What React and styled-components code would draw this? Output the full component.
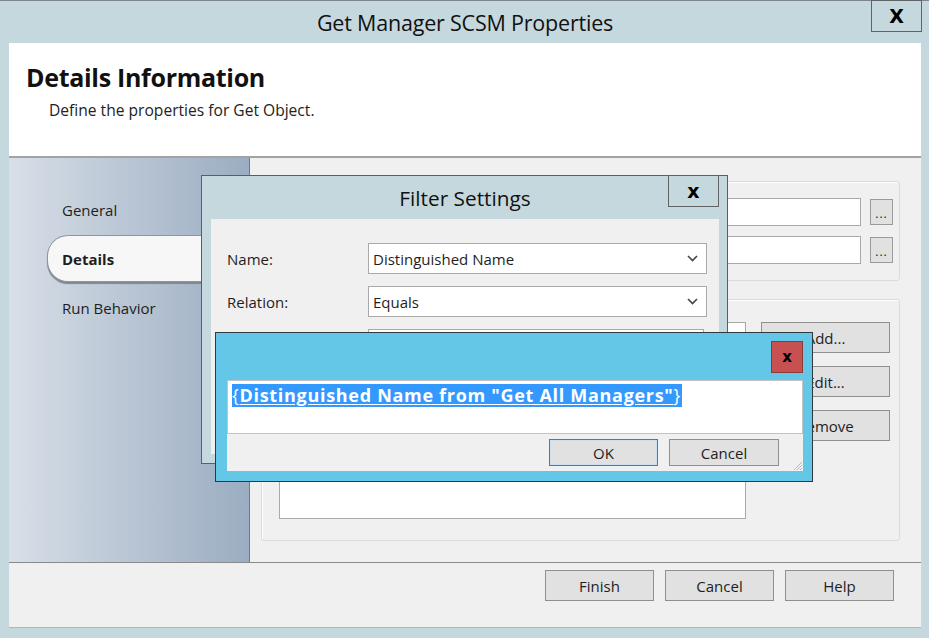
import React from "react";
import styled, { createGlobalStyle } from "styled-components";

const GlobalStyle = createGlobalStyle`
  html, body { margin: 0; padding: 0; }
  body {
    background: #c5d8de;
    font-family: "Open Sans", "Noto Sans", "Liberation Sans", sans-serif;
    color: #1e1e1e;
  }
`;

const Desktop = styled.div`
  position: relative;
  width: 929px;
  height: 638px;
  overflow: hidden;
`;

const Window = styled.div`
  display: flex;
  flex-direction: column;
  height: 100%;
  box-sizing: border-box;
  background: #c5d8de;
  border-top: 1px solid #7b878c;
  padding: 0 8px 10px 9px;
`;

const TitleBar = styled.div`
  display: grid;
  grid-template-columns: 1fr auto 1fr;
  height: ${({ h }) => h}px;
  flex-shrink: 0;
`;

const Title = styled.div`
  grid-column: 2;
  align-self: center;
  font-size: 21.5px;
  color: #111;
  letter-spacing: -0.2px;
`;

const CloseBtn = styled.div`
  grid-column: 3;
  justify-self: end;
  align-self: start;
  margin-top: -1px;
  margin-right: ${({ mr }) => mr || 0}px;
  width: ${({ w }) => w}px;
  height: 32px;
  box-sizing: border-box;
  border: 1px solid ${({ red }) => (red ? "#8d3a33" : "#5e6366")};
  background: ${({ red }) => (red ? "#c75050" : "transparent")};
  display: flex;
  align-items: center;
  justify-content: center;
  font-family: "DejaVu Sans", sans-serif;
  font-weight: bold;
  font-size: ${({ fs }) => fs}px;
  color: #000;
`;

const Client = styled.div`
  flex: 1;
  display: flex;
  flex-direction: column;
`;

const Header = styled.div`
  height: 115px;
  background: #fff;
  border-bottom: 2px solid #a3a3a3;
  padding: 20px 0 0 17px;
  box-sizing: border-box;
  flex-shrink: 0;
`;

const Heading = styled.div`
  font-weight: bold;
  font-size: 25px;
  line-height: 28px;
  letter-spacing: -0.3px;
  color: #111;
`;

const SubHeading = styled.div`
  margin: 8px 0 0 23px;
  font-size: 15.6px;
  color: #222;
`;

const Body = styled.div`
  flex: 1;
  display: flex;
  min-height: 0;
`;

const Nav = styled.div`
  width: 241px;
  flex-shrink: 0;
  box-sizing: border-box;
  border-right: 1px solid #75787c;
  background: linear-gradient(to right, #d8dfe7 0%, #bcc8d6 45%, #9badc2 100%);
  padding: 28px 0 0 38px;
  display: flex;
  flex-direction: column;
  gap: 2px;
`;

const NavItem = styled.div`
  height: 47px;
  display: flex;
  align-items: center;
  padding-left: 14px;
  font-size: 15px;
  color: #1e1e1e;
  box-sizing: border-box;
  font-weight: ${({ active }) => (active ? "bold" : "normal")};
  background: ${({ active }) => (active ? "#f7f7f7" : "transparent")};
  border: 1px solid ${({ active }) => (active ? "#8e959c" : "transparent")};
  border-right: none;
  border-radius: 21px 0 0 21px;
  box-shadow: ${({ active }) => (active ? "0 2px 1px #7f8790" : "none")};
  margin-right: -1px;
`;

const Content = styled.div`
  flex: 1;
  background: #f0f0f0;
  padding: 23px 21px 21px 11px;
  display: flex;
  flex-direction: column;
  gap: 18px;
`;

const Group = styled.div`
  position: relative;
  box-sizing: border-box;
  border: 1px solid #dadada;
  box-shadow: inset 1px 1px 0 #fff;
  border-radius: 3px;
  height: ${({ h }) => (h ? `${h}px` : "auto")};
  flex: ${({ h }) => (h ? "none" : 1)};
  display: flex;
  padding: ${({ pad }) => pad};
`;

const Caption = styled.div`
  position: absolute;
  left: 10px;
  top: -9px;
  font-size: 14px;
  background: #f0f0f0;
  padding: 0 2px;
`;

const FieldRows = styled.div`
  flex: 1;
  display: grid;
  grid-template-columns: 100px 1fr 23px;
  column-gap: 9px;
  row-gap: 10px;
  align-content: start;
  padding: 16px 6px 0 10px;
`;

const FieldLabel = styled.div`
  font-size: 14px;
  align-self: center;
`;

const TextBox = styled.div`
  height: ${({ h }) => h || 28}px;
  box-sizing: border-box;
  background: #fff;
  border: 1px solid #a9a9a9;
  margin-right: ${({ mr }) => mr || 0}px;
`;

const DotsBtn = styled.div`
  height: 26px;
  align-self: center;
  box-sizing: border-box;
  background: #e1e1e1;
  border: 1px solid #9a9a9a;
  font-size: 12px;
  display: flex;
  justify-content: center;
  align-items: flex-end;
  padding-bottom: 4px;
  line-height: 1;
  letter-spacing: 1px;
`;

const ListBox = styled.div`
  flex: 1;
  background: #fff;
  border: 1px solid #a9a9a9;
`;

const SideButtons = styled.div`
  width: 129px;
  margin-left: 15px;
  display: flex;
  flex-direction: column;
  gap: 13px;
`;

const Button = styled.div`
  width: ${({ w }) => w}px;
  height: ${({ h }) => h}px;
  box-sizing: border-box;
  background: #e1e1e1;
  border: 1px solid ${({ primary }) => (primary ? "#3d7db8" : "#8f8f8f")};
  box-shadow: ${({ primary }) => (primary ? "inset 0 0 0 1px #c9dff2" : "none")};
  display: flex;
  align-items: center;
  justify-content: center;
  font-size: 15px;
  color: #1e1e1e;
`;

const Footer = styled.div`
  height: 66px;
  flex-shrink: 0;
  box-sizing: border-box;
  background: #f0f0f0;
  border-top: 1px solid #8a8a8a;
  border-bottom: 1px solid #b5b5b5;
  display: flex;
  justify-content: flex-end;
  align-items: flex-start;
  gap: 11px;
  padding: 7px 27px 0 0;
`;

/* Filter Settings dialog */
const FilterDialog = styled.div`
  position: absolute;
  left: 201px;
  top: 175px;
  width: 527px;
  height: 289px;
  box-sizing: border-box;
  border: 1px solid #5b5f62;
  background: #c5d8de;
  display: flex;
  flex-direction: column;
  padding: 0 8px 9px 9px;
`;

const DialogTitle = styled.div`
  grid-column: 2;
  align-self: center;
  font-size: 20.8px;
  color: #111;
`;

const FilterClient = styled.div`
  flex: 1;
  background: #f0f0f0;
  display: grid;
  grid-template-columns: 141px 1fr;
  row-gap: 12px;
  align-content: start;
  padding: 24px 12px 0 16px;
`;

const FormLabel = styled.div`
  font-size: 15px;
  align-self: center;
  color: #1e1e1e;
`;

const Combo = styled.div`
  height: 31px;
  box-sizing: border-box;
  background: #fff;
  border: 1px solid #a9a9a9;
  display: flex;
  align-items: center;
  justify-content: space-between;
  padding: 0 8px 0 4px;
  font-size: 15px;
  color: #1e1e1e;
`;

/* Expression dialog */
const ExprDialog = styled.div`
  position: absolute;
  left: 215px;
  top: 332px;
  width: 598px;
  height: 150px;
  box-sizing: border-box;
  border: 1px solid #2e3a3f;
  background: #64c7e8;
  display: flex;
  flex-direction: column;
  padding: 0 9px 10px 11px;
`;

const ExprHead = styled.div`
  height: 47px;
  display: flex;
  justify-content: flex-end;
  align-items: flex-start;
  padding-top: 9px;
  box-sizing: border-box;
`;

const ExprClient = styled.div`
  position: relative;
  flex: 1;
  background: #f0f0f0;
  display: flex;
  flex-direction: column;
`;

const ExprText = styled.div`
  height: 54px;
  box-sizing: border-box;
  background: #fff;
  border: 1px solid #c3c3c3;
  padding: 3px 4px;
`;

const Selection = styled.span`
  display: inline-block;
  background: #3399ff;
  color: #fff;
  font-size: 18px;
  line-height: 23px;
  letter-spacing: 0.7px;
  padding-right: 1px;
`;

const Brace = styled.span`
  font-weight: normal;
`;

const Linked = styled.span`
  font-weight: bold;
  text-decoration: underline;
  text-underline-offset: 2px;
`;

const ExprButtons = styled.div`
  flex: 1;
  display: flex;
  justify-content: flex-end;
  align-items: flex-start;
  gap: 11px;
  padding: 5px 24px 0 0;
`;

const Grip = styled.svg`
  position: absolute;
  right: 0;
  bottom: 0;
`;

const Chevron = () => (
  <svg width="11" height="7" viewBox="0 0 11 7">
    <polyline points="1,1 5.5,5.5 10,1" fill="none" stroke="#444" strokeWidth="1.6" />
  </svg>
);

const App = () => {
  return (
    <Desktop>
      <GlobalStyle />
      <Window>
        <TitleBar h={42}>
          <Title>Get Manager SCSM Properties</Title>
          <CloseBtn w={51} mr={-1} fs={19}>X</CloseBtn>
        </TitleBar>
        <Client>
          <Header>
            <Heading>Details Information</Heading>
            <SubHeading>Define the properties for Get Object.</SubHeading>
          </Header>
          <Body>
            <Nav>
              <NavItem>General</NavItem>
              <NavItem active>Details</NavItem>
              <NavItem>Run Behavior</NavItem>
            </Nav>
            <Content>
              <Group h={100}>
                <Caption>Properties</Caption>
                <FieldRows>
                  <FieldLabel>Object:</FieldLabel>
                  <TextBox />
                  <DotsBtn>...</DotsBtn>
                  <FieldLabel>Filter:</FieldLabel>
                  <TextBox />
                  <DotsBtn>...</DotsBtn>
                </FieldRows>
              </Group>
              <Group pad="22px 9px 21px 17px">
                <ListBox />
                <SideButtons>
                  <Button w={129} h={31}>Add...</Button>
                  <Button w={129} h={31}>Edit...</Button>
                  <Button w={129} h={31}>Remove</Button>
                </SideButtons>
              </Group>
            </Content>
          </Body>
          <Footer>
            <Button w={109} h={31}>Finish</Button>
            <Button w={109} h={31}>Cancel</Button>
            <Button w={109} h={31}>Help</Button>
          </Footer>
        </Client>
      </Window>

      <FilterDialog>
        <TitleBar h={43}>
          <DialogTitle>Filter Settings</DialogTitle>
          <CloseBtn w={51} fs={19}>x</CloseBtn>
        </TitleBar>
        <FilterClient>
          <FormLabel>Name:</FormLabel>
          <Combo>
            <span>Distinguished Name</span>
            <Chevron />
          </Combo>
          <FormLabel>Relation:</FormLabel>
          <Combo>
            <span>Equals</span>
            <Chevron />
          </Combo>
          <FormLabel>Value:</FormLabel>
          <TextBox h={30} mr={3} />
        </FilterClient>
      </FilterDialog>

      <ExprDialog>
        <ExprHead>
          <CloseBtn w={32} red fs={15}>x</CloseBtn>
        </ExprHead>
        <ExprClient>
          <ExprText>
            <Selection>
              <Brace>{"{"}</Brace>
              <Linked>Distinguished Name from "Get All Managers"</Linked>
              <Brace>{"}"}</Brace>
            </Selection>
          </ExprText>
          <ExprButtons>
            <Button w={109} h={27} primary>OK</Button>
            <Button w={110} h={27}>Cancel</Button>
          </ExprButtons>
          <Grip width="12" height="12" viewBox="0 0 12 12">
            <path d="M11 3 L3 11 M11 6 L6 11 M11 9 L9 11" stroke="#b8b8b8" strokeWidth="1" />
          </Grip>
        </ExprClient>
      </ExprDialog>
    </Desktop>
  );
};

export default App;
